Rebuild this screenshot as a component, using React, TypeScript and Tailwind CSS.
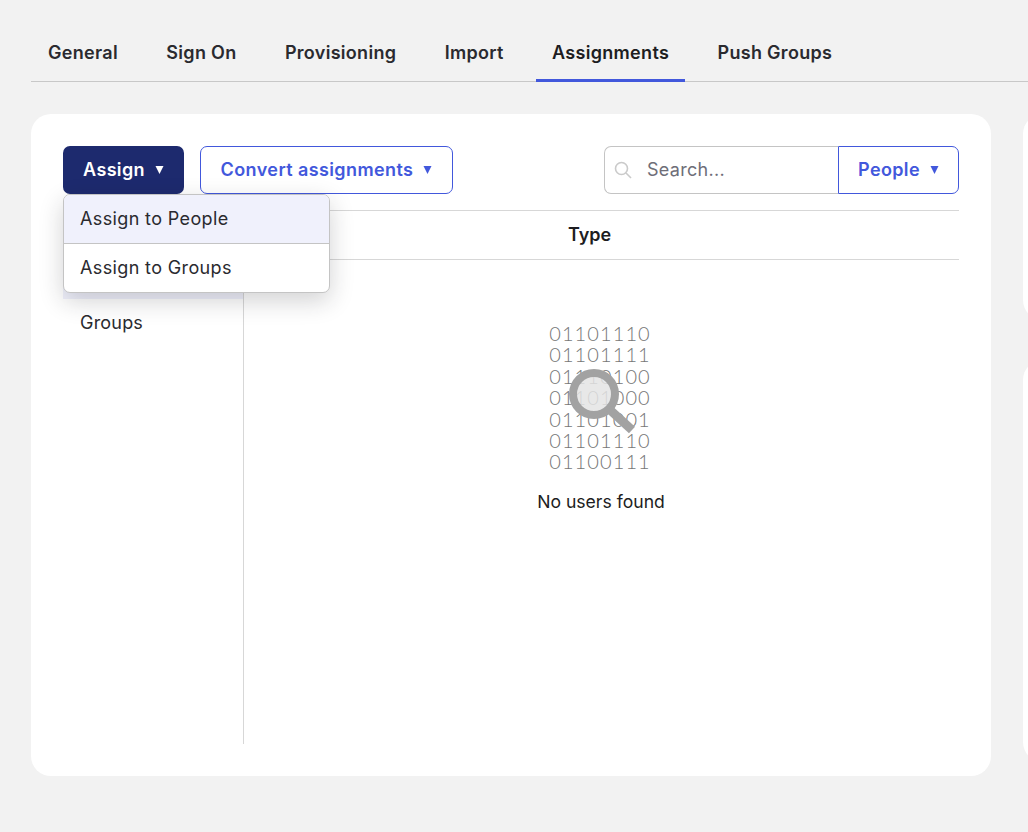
const tabs = ["General", "Sign On", "Provisioning", "Import", "Assignments", "Push Groups"];
const binary = ["01101110", "01101111", "01110100", "01101000", "01101001", "01101110", "01100111"];

function Caret({ className }: { className: string }) {
  return (
    <svg width="9" height="10" viewBox="0 0 9 10" className={className}>
      <path d="M0.5 1h8L4.5 9z" fill="currentColor" />
    </svg>
  );
}

export default function App() {
  return (
    <div className="h-[832px] w-[1028px] overflow-hidden bg-[#f2f2f2] font-['Inter',sans-serif] text-[#1d1d21]">
      <div className="pl-[31px] pt-6">
        <nav className="flex h-[58px] w-[997px] border-b border-[#c8c8c8] pl-px">
          {tabs.map((tab) => (
            <div
              key={tab}
              className={`-mb-px mr-[16.4px] flex items-center px-4 pb-[1px] text-[18px] font-semibold tracking-[0.3px] ${
                tab === "Assignments" ? "border-b-[3px] border-[#4258dc] pt-[3px]" : "text-[#2a2a2f]"
              }`}
            >
              {tab}
            </div>
          ))}
        </nav>

        <div className="mt-8 flex gap-8">
          <section className="h-[662px] w-[960px] shrink-0 rounded-[20px] bg-white p-8">
            <div className="relative flex h-12 items-center">
              <button className="flex h-12 w-[121px] items-center justify-center gap-[10px] rounded-[7px] bg-[#1d2a6e] pb-[2px] text-[18px] font-semibold tracking-[0.35px] text-white">
                Assign <Caret className="mt-[2px] text-white" />
              </button>
              <button className="ml-4 flex h-12 w-[253px] items-center justify-center gap-[10px] rounded-[7px] border border-[#4258dc] pb-[2px] text-[18px] font-semibold tracking-[0.4px] text-[#4258dc]">
                Convert assignments <Caret className="mt-[2px] text-[#4258dc]" />
              </button>
              <div className="ml-auto flex h-12">
                <div className="flex w-[234px] items-center gap-[15px] rounded-l-[7px] border border-r-0 border-[#c4c4c4] pl-[9px]">
                  <svg width="18" height="18" viewBox="0 0 18 18" fill="none" stroke="#cacaca" strokeWidth="1.6">
                    <circle cx="7.5" cy="7.5" r="6" />
                    <path d="M12 12l5 5" />
                  </svg>
                  <span className="pb-[2px] text-[18px] tracking-[0.3px] text-[#6e6e78]">Search...</span>
                </div>
                <button className="flex w-[121px] items-center justify-center gap-[10px] rounded-r-[7px] border border-[#4258dc] pb-[2px] text-[18px] font-semibold tracking-[0.35px] text-[#4258dc]">
                  People <Caret className="mt-[2px] text-[#4258dc]" />
                </button>
              </div>

              <div className="absolute left-0 top-12 z-10 w-[267px] overflow-hidden rounded-[7px] border border-[#c4c4c4] bg-white text-[18px] tracking-[0.37px] text-[#2a2a2f] shadow-[0_8px_24px_rgba(29,29,33,0.2)]">
                <div className="flex h-[49px] items-center border-b border-[#c4c4c4] bg-[#f0f1fc] pb-px pl-4">Assign to People</div>
                <div className="flex h-12 items-center pb-[2px] pl-4">Assign to Groups</div>
              </div>
            </div>

            <div className="mt-4 flex h-[534px]">
              <aside className="w-[181px] shrink-0 border-r border-[#d7d7d7] pt-[41px] text-[18px] tracking-[0.2px] text-[#2a2a2f]">
                <div className="h-12 bg-[#f0f1fc]" />
                <div className="flex h-[46px] items-center pl-[17px]">Groups</div>
              </aside>
              <div className="relative flex-1">
                <div className="flex h-[50px] items-center border-y border-[#d7d7d7] pb-[2px] pl-[324px] text-[18px] font-semibold">Type</div>
                <div className="flex flex-col items-center pr-[3px] pt-[63px]">
                  <div className="relative">
                    <pre className="font-['Lato',sans-serif] text-[20px] font-light leading-[21.4px] tracking-[1.1px] text-[#777777]">
                      {binary.join("\n")}
                    </pre>
                    <svg width="76" height="76" viewBox="0 0 76 76" className="absolute left-[16px] top-[42px]">
                      <circle cx="29" cy="29" r="21" fill="#e4e4e4" fillOpacity="0.85" stroke="#a2a2a2" strokeWidth="8" />
                      <path d="M44 44l23 21" stroke="#a2a2a2" strokeWidth="9" />
                    </svg>
                  </div>
                  <p className="ml-[2px] mt-[16px] text-[17.6px]">No users found</p>
                </div>
              </div>
            </div>
          </section>

          <aside className="flex shrink-0 flex-col gap-10">
            <div className="h-[206px] w-[300px] rounded-[20px] bg-white" />
            <div className="h-[402px] w-[300px] rounded-[20px] bg-white" />
          </aside>
        </div>
      </div>
    </div>
  );
}
